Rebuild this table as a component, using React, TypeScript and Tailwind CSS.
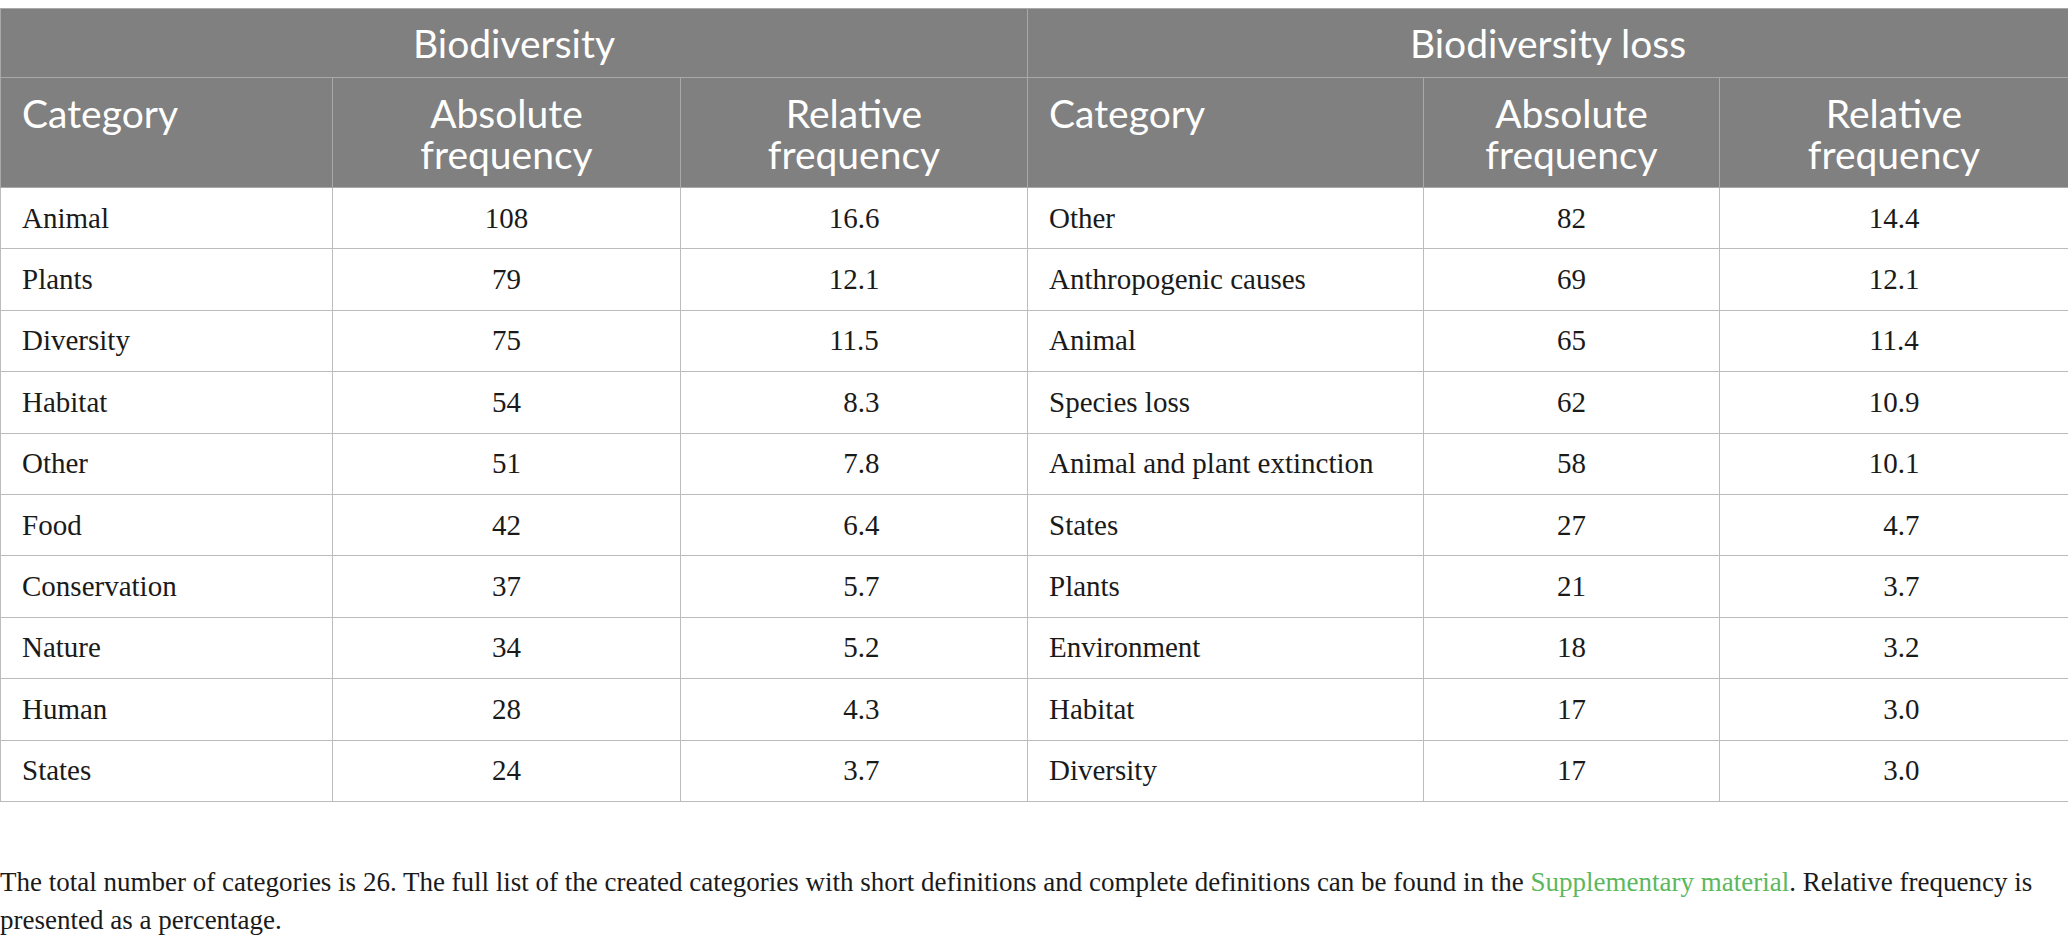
import React from "react";

type Row = [string, string, string];

const fs = "\u2007";

const biodiversity: Row[] = [
  ["Animal", "108", "16.6"],
  ["Plants", "79", "12.1"],
  ["Diversity", "75", "11.5"],
  ["Habitat", "54", fs + "8.3"],
  ["Other", "51", fs + "7.8"],
  ["Food", "42", fs + "6.4"],
  ["Conservation", "37", fs + "5.7"],
  ["Nature", "34", fs + "5.2"],
  ["Human", "28", fs + "4.3"],
  ["States", "24", fs + "3.7"],
];

const loss: Row[] = [
  ["Other", "82", "14.4"],
  ["Anthropogenic causes", "69", "12.1"],
  ["Animal", "65", "11.4"],
  ["Species loss", "62", "10.9"],
  ["Animal and plant extinction", "58", "10.1"],
  ["States", "27", fs + "4.7"],
  ["Plants", "21", fs + "3.7"],
  ["Environment", "18", fs + "3.2"],
  ["Habitat", "17", fs + "3.0"],
  ["Diversity", "17", fs + "3.0"],
];

const th = "border border-[#a9a9a9] bg-[#7f807f] text-white font-normal align-top pt-[15px] leading-[41px] text-[39px]";
const td = "border border-[#bcbcbc] h-[61.4px] text-[29px] leading-none text-[#1a1a1a]";

export default function App() {
  return (
    <div className="w-[2068px] bg-white pt-[8px]">
      <table className="w-[2068px] table-fixed border-collapse font-['Lato',sans-serif]">
        <colgroup>
          <col className="w-[332px]" />
          <col className="w-[348px]" />
          <col className="w-[347px]" />
          <col className="w-[396px]" />
          <col className="w-[296px]" />
          <col className="w-[349px]" />
        </colgroup>
        <thead>
          <tr className="h-[69px]">
            <th colSpan={3} className="border border-[#a9a9a9] bg-[#7f807f] text-white font-normal text-[39px] leading-none text-center">
              Biodiversity
            </th>
            <th colSpan={3} className="border border-[#a9a9a9] bg-[#7f807f] text-white font-normal text-[39px] leading-none text-center">
              Biodiversity loss
            </th>
          </tr>
          <tr className="h-[110px]">
            <th className={th + " text-left pl-[21px]"}>Category</th>
            <th className={th + " text-center"}>Absolute<br />frequency</th>
            <th className={th + " text-center"}>Relative<br />frequency</th>
            <th className={th + " text-left pl-[21px]"}>Category</th>
            <th className={th + " text-center"}>Absolute<br />frequency</th>
            <th className={th + " text-center"}>Relative<br />frequency</th>
          </tr>
        </thead>
        <tbody className="font-['Liberation_Serif',serif]">
          {biodiversity.map((row, i) => (
            <tr key={i}>
              <td className={td + " pl-[21px]"}>{row[0]}</td>
              <td className={td + " text-center"}>{row[1]}</td>
              <td className={td + " text-center"}>{row[2]}</td>
              <td className={td + " pl-[21px]"}>{loss[i][0]}</td>
              <td className={td + " text-center"}>{loss[i][1]}</td>
              <td className={td + " text-center"}>{loss[i][2]}</td>
            </tr>
          ))}
        </tbody>
      </table>

      <p className="mt-[61px] font-['Liberation_Serif',serif] text-[27px] leading-[38px] text-[#1a1a1a]">
        The total number of categories is 26. The full list of the created categories with short definitions and complete definitions can be found in the{" "}
        <a className="text-[#5cb85c]">Supplementary material</a>. Relative frequency is presented as a percentage.
      </p>
    </div>
  );
}
